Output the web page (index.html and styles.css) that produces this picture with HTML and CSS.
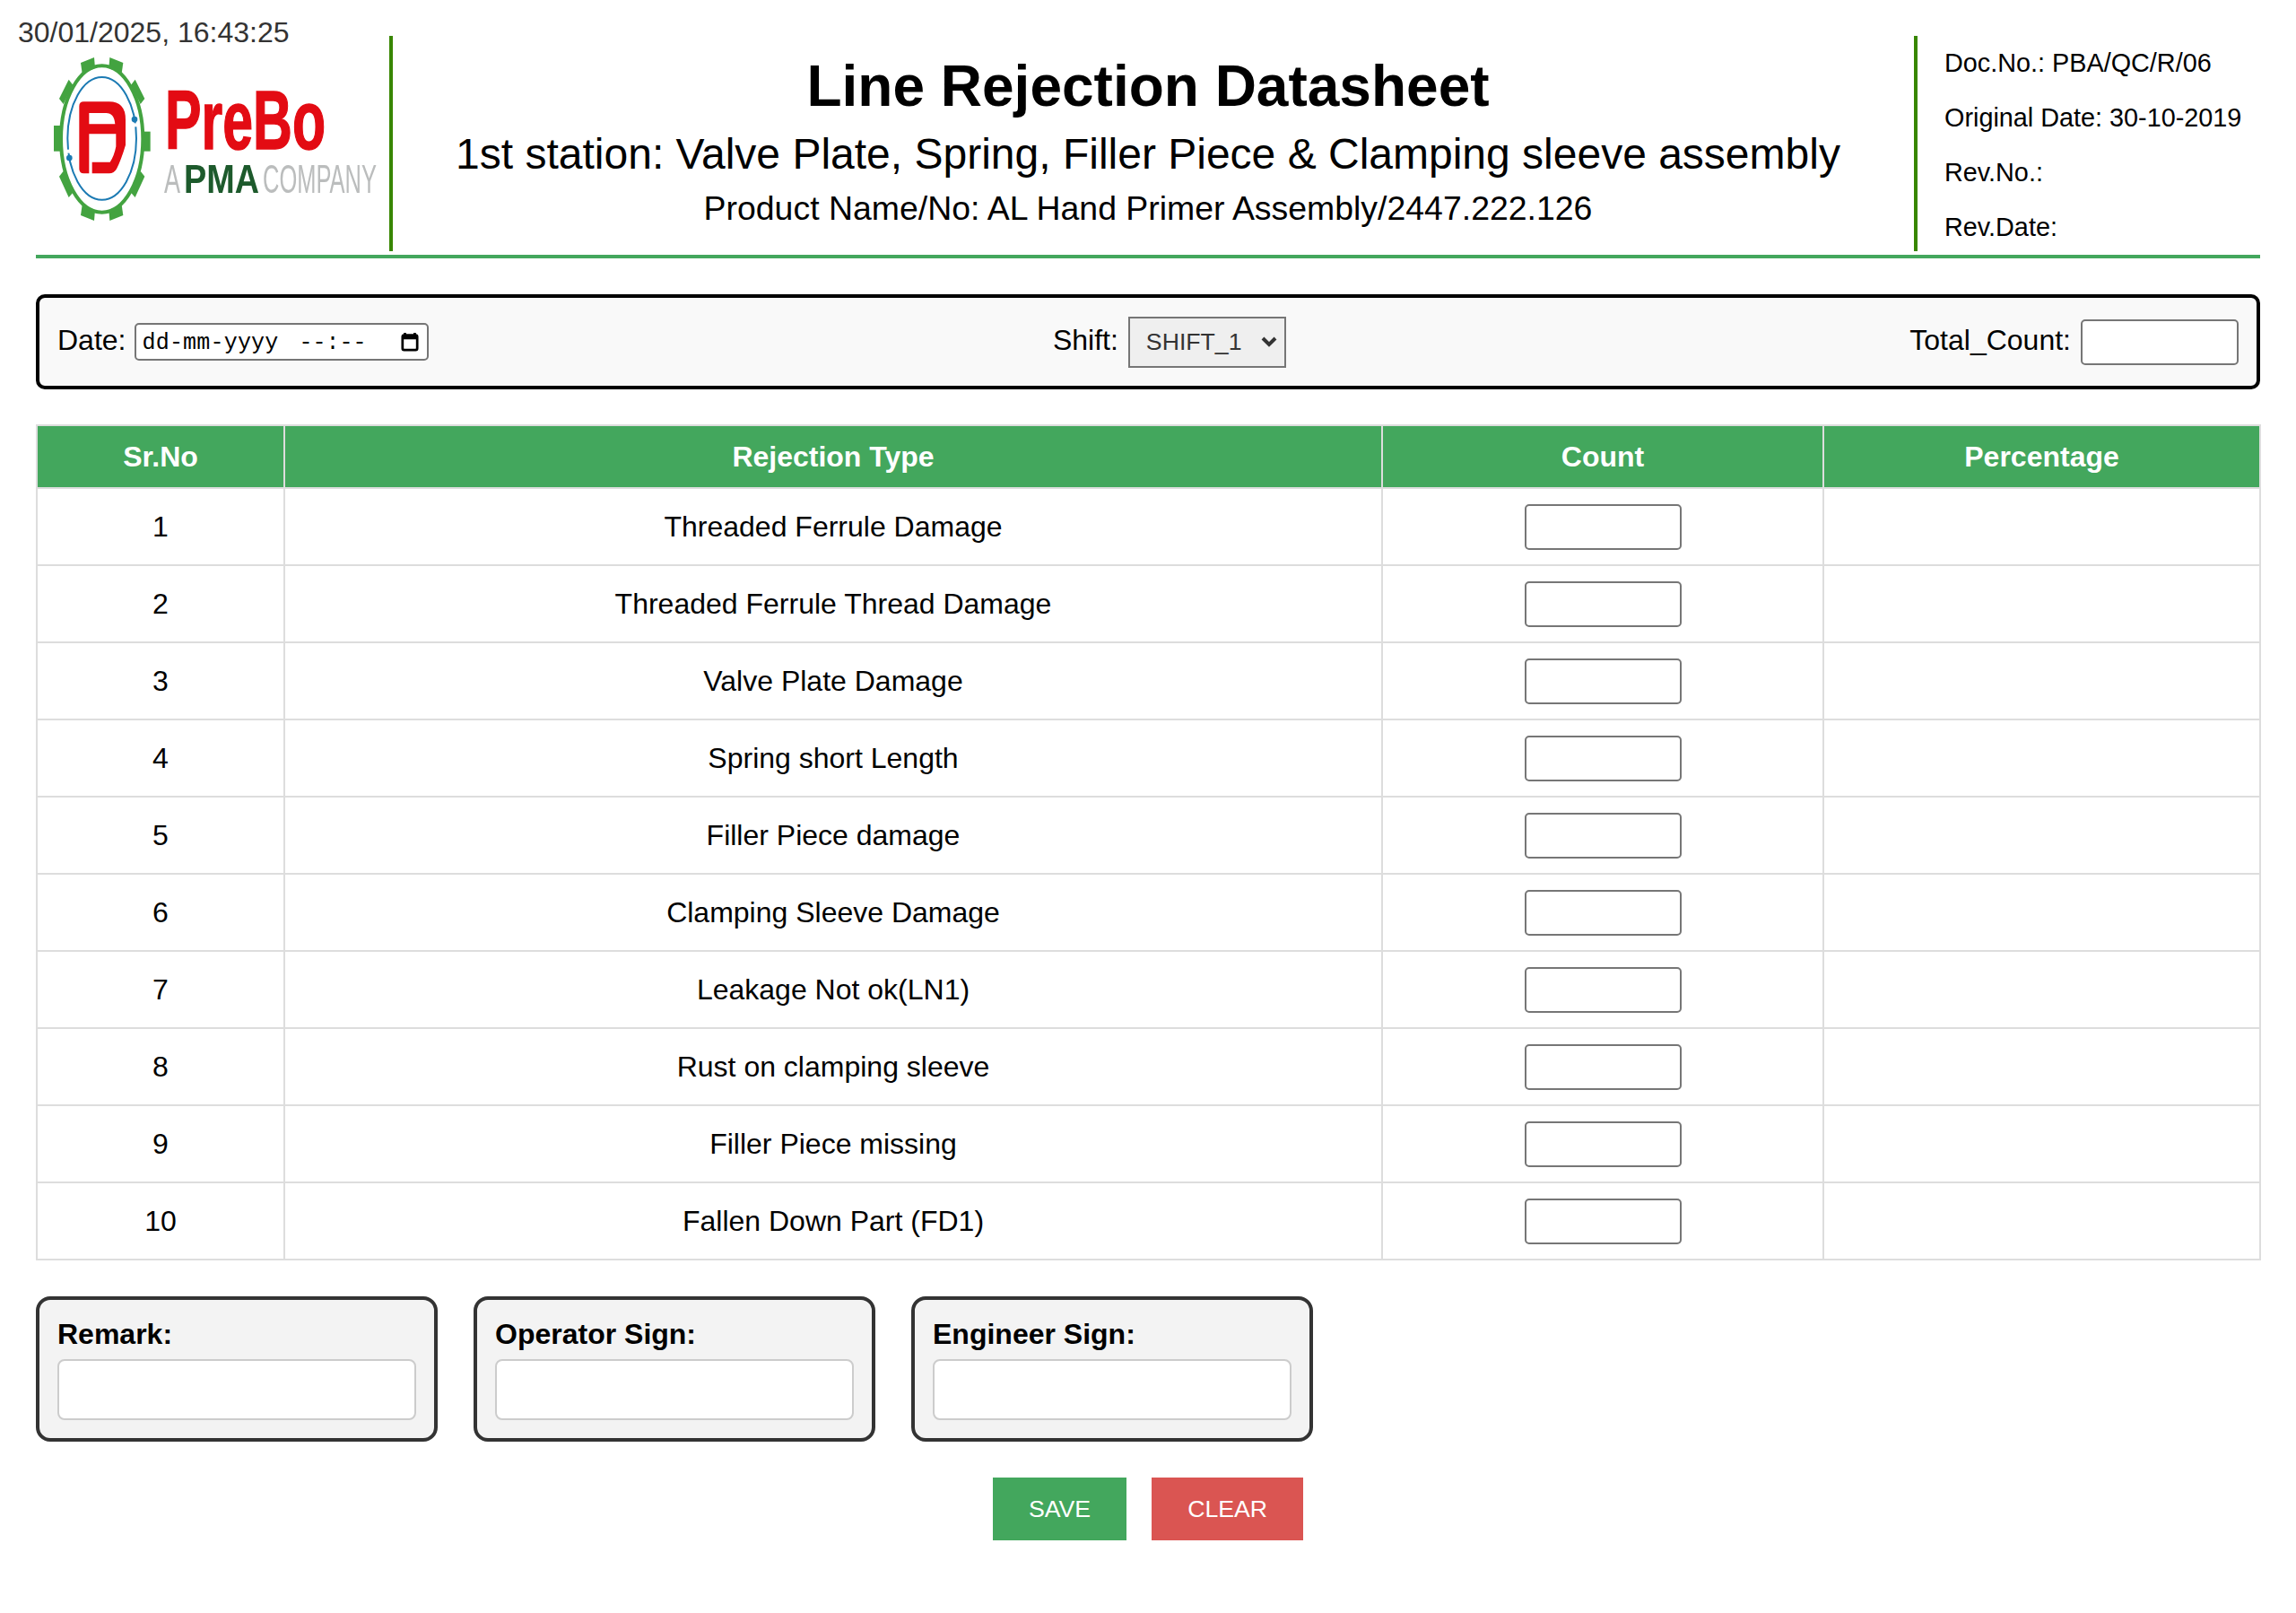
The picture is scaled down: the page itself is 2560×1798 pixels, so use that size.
FILE: index.html
```html
<!doctype html>
<html>
<head>
<meta charset="utf-8">
<title>Line Rejection Datasheet</title>
<link rel="stylesheet" href="styles.css">
</head>
<body>

<div class="stamp">30/01/2025, 16:43:25</div>

<header class="top">
    <div class="logo">
        <svg class="logo-art" width="380" height="210" viewBox="50 50 380 210">
            <g transform="translate(50 50) scale(.3333)">
                <!-- gear -->
                <g fill="#43a340">
                    <polygon points="120,60 165,42 168,78 125,95"/>
                    <polygon points="262,60 217,42 214,78 257,95"/>
                    <polygon points="80,116 94,134 62,198 48,180"/>
                    <polygon points="302,116 288,134 320,198 334,180"/>
                    <rect x="30" y="270" width="24" height="86"/>
                    <rect x="330" y="290" width="23" height="66"/>
                    <polygon points="48,440 62,422 94,494 80,510"/>
                    <polygon points="334,440 320,422 288,494 302,510"/>
                    <polygon points="120,570 165,588 168,552 125,535"/>
                    <polygon points="262,570 217,588 214,552 257,535"/>
                </g>
                <ellipse cx="191" cy="315" rx="137" ry="245" fill="none" stroke="#43a340" stroke-width="12"/>
                <ellipse cx="191" cy="313" rx="115" ry="205" fill="none" stroke="#1b7ab3" stroke-width="6"/>
                <rect x="295" y="262" width="20" height="12" fill="#fff"/>
                <rect x="66" y="350" width="20" height="12" fill="#fff"/>
                <circle cx="300" cy="249" r="10" fill="#1b7ab3"/>
                <circle cx="82" cy="378" r="10" fill="#1b7ab3"/>
                <!-- PB mark -->
                <path d="M115,205 Q115,190 130,190 L215,190 Q270,190 270,250 L270,335 Q255,385 240,415 Q232,430 215,430 L158,430 L158,392 L218,392 Q232,372 238,340 L238,298 L148,298 L148,430 L130,430 Q115,430 115,415 Z M148,228 L148,265 L235,265 Q232,228 205,228 Z" fill="#e30b13" fill-rule="evenodd"/>
            </g>
            <text class="logo-prebo" x="184" y="166" textLength="179" lengthAdjust="spacingAndGlyphs">PreBo</text>
            <text class="logo-a" x="183" y="215" textLength="18" lengthAdjust="spacingAndGlyphs">A</text>
            <text class="logo-pma" x="205" y="215" textLength="84" lengthAdjust="spacingAndGlyphs">PMA</text>
            <text class="logo-company" x="293" y="215" textLength="127" lengthAdjust="spacingAndGlyphs">COMPANY</text>
        </svg>
    </div>
    <div class="heading">
        <h1>Line Rejection Datasheet</h1>
        <h2>1st station: Valve Plate, Spring, Filler Piece &amp; Clamping sleeve assembly</h2>
        <h3>Product Name/No: AL Hand Primer Assembly/2447.222.126</h3>
    </div>
    <div class="docinfo">
        <p>Doc.No.: PBA/QC/R/06</p>
        <p>Original Date: 30-10-2019</p>
        <p>Rev.No.:</p>
        <p>Rev.Date:</p>
    </div>
</header>

<section class="filterbar">
    <div class="field field-date">
        <label>Date:</label>
        <div class="datebox">
            <span class="date-part">dd-mm-yyyy</span>
            <span class="time-part">--:--</span>
            <svg class="cal" width="20" height="22" viewBox="0 0 22 24">
                <path d="M5 1v4M17 1v4" stroke="#000" stroke-width="3"/>
                <rect x="2" y="4" width="18" height="18" rx="2" fill="none" stroke="#000" stroke-width="3"/>
                <rect x="2" y="4" width="18" height="5" fill="#000"/>
            </svg>
        </div>
    </div>
    <div class="field">
        <label for="shift">Shift:</label>
        <div class="shiftwrap">
            <select id="shift" class="shift"><option>SHIFT_1</option><option>SHIFT_2</option><option>SHIFT_3</option></select>
            <svg class="shift-arrow" width="18" height="12" viewBox="0 0 18 12"><path d="M2 2l7 7 7-7" fill="none" stroke="#333" stroke-width="4"/></svg>
        </div>
    </div>
    <div class="field">
        <label for="total">Total_Count:</label>
        <input id="total" class="count count-total" type="text">
    </div>
</section>

<table class="rejections">
    <colgroup><col class="c-sr"><col class="c-type"><col class="c-count"><col class="c-pct"></colgroup>
    <tr><th>Sr.No</th><th>Rejection Type</th><th>Count</th><th>Percentage</th></tr>
    <tr><td>1</td><td>Threaded Ferrule Damage</td><td><input class="count" type="text"></td><td></td></tr>
    <tr><td>2</td><td>Threaded Ferrule Thread Damage</td><td><input class="count" type="text"></td><td></td></tr>
    <tr><td>3</td><td>Valve Plate Damage</td><td><input class="count" type="text"></td><td></td></tr>
    <tr><td>4</td><td>Spring short Length</td><td><input class="count" type="text"></td><td></td></tr>
    <tr><td>5</td><td>Filler Piece damage</td><td><input class="count" type="text"></td><td></td></tr>
    <tr><td>6</td><td>Clamping Sleeve Damage</td><td><input class="count" type="text"></td><td></td></tr>
    <tr><td>7</td><td>Leakage Not ok(LN1)</td><td><input class="count" type="text"></td><td></td></tr>
    <tr><td>8</td><td>Rust on clamping sleeve</td><td><input class="count" type="text"></td><td></td></tr>
    <tr><td>9</td><td>Filler Piece missing</td><td><input class="count" type="text"></td><td></td></tr>
    <tr><td>10</td><td>Fallen Down Part (FD1)</td><td><input class="count" type="text"></td><td></td></tr>
</table>

<section class="signs">
    <div class="signcard"><label>Remark:</label><input type="text"></div>
    <div class="signcard"><label>Operator Sign:</label><input type="text"></div>
    <div class="signcard"><label>Engineer Sign:</label><input type="text"></div>
</section>

<div class="actions">
    <button class="btn btn-save">SAVE</button>
    <button class="btn btn-clear">CLEAR</button>
</div>

</body>
</html>
```

FILE: styles.css
```css
* { box-sizing: border-box; }
body { margin: 0; padding: 40px 40px 80px; font-family: "Liberation Sans", Arial, sans-serif; font-size: 32px; color: #000; background: #fff; }

.stamp { position: absolute; left: 20px; top: 18px; font-size: 32px; line-height: 37px; color: #333; }

/* header */
.top { display: flex; align-items: flex-start; height: 248px; border-bottom: 4px solid #43a75d; }
.logo { width: 398px; height: 240px; border-right: 4px solid #388600; padding-left: 10px; padding-top: 10px; flex: none; }
.logo-art { display: block; filter: blur(.5px); }
.logo-prebo { font-size: 92px; font-weight: 700; fill: #e30b13; stroke: #e30b13; stroke-width: 1.5px; }
.logo-a, .logo-company { font-size: 44px; fill: #bbbdbd; }
.logo-pma { font-size: 44px; font-weight: 700; fill: #1d5a2c; }

.heading { flex: 1; padding-right: 12px; text-align: center; }
h1 { margin: 19px 0 0; font-size: 64px; line-height: 74px; }
h2 { margin: 11px 0 0; font-size: 48px; line-height: 56px; font-weight: 400; }
h3 { margin: 10px 0 0; font-size: 37.44px; line-height: 44px; font-weight: 400; }

.docinfo { width: 386px; height: 240px; flex: none; border-left: 4px solid #388600; padding-left: 30px; }
.docinfo p { margin: 0; font-size: 28.8px; line-height: 61px; white-space: nowrap; }

/* date / shift / total */
.filterbar { display: flex; justify-content: space-between; align-items: center; margin-top: 40px; padding: 20px; height: 106px; background: #f9f9f9; border: 4px solid #000; border-radius: 10px; }
.field { display: flex; align-items: center; gap: 11px; }
.field label { margin-bottom: 3px; }
.field-date { gap: 10px; }
.datebox { display: flex; align-items: center; width: 328px; height: 42px; padding: 3px 0 0 6px; background: #fff; border: 2px solid #767676; border-radius: 5px; font-family: "Liberation Mono", monospace; font-size: 25px; }
.date-part { letter-spacing: .2px; }
.time-part { margin-left: 23px; }
.cal { margin: -3px 9px 0 auto; }
.shiftwrap { position: relative; display: flex; }
.shift { appearance: none; width: 176px; height: 57px; padding: 0 0 0 18px; font-family: "Liberation Sans", Arial, sans-serif; font-size: 26.67px; color: #333; border: 2px solid #767676; background-color: #efefef; border-radius: 0; }
.shift-arrow { position: absolute; right: 10px; top: 22px; pointer-events: none; }
.count { width: 175px; height: 51px; padding: 0 8px; background: #fff; border: 2px solid #767676; border-radius: 5px; font-size: 28px; }
.count-total { width: 176px; }

/* table */
.rejections { width: 2479px; margin-top: 39px; border-collapse: collapse; table-layout: fixed; }
.c-sr { width: 276px; }
.c-type { width: 1224px; }
.c-count { width: 492px; }
.c-pct { width: 487px; }
.rejections th, .rejections td { padding: 0; text-align: center; border: 2px solid #ddd; }
.rejections th { height: 70px; color: #fff; background: #43a75d; font-weight: 700; }
.rejections td { height: 86px; }
.rejections td .count { display: block; margin: 0 auto; }

/* signatures */
.signs { display: flex; gap: 40px; margin-top: 40px; }
.signcard { width: 448px; height: 162px; padding: 20px; background: #f3f3f3; border: 4px solid #333; border-radius: 16px; }
.signcard label { display: block; margin-bottom: 9px; font-weight: 700; line-height: 37px; }
.signcard input { display: block; width: 400px; height: 68px; background: #fff; border: 2px solid #ccc; border-radius: 8px; }

/* buttons */
.actions { display: flex; justify-content: center; gap: 28px; margin-top: 40px; }
.btn { height: 70px; padding: 0 40px; border: 0; color: #fff; font-family: inherit; font-size: 26.67px; }
.btn-save { background: #43a75d; }
.btn-clear { background: #da5552; }
```
